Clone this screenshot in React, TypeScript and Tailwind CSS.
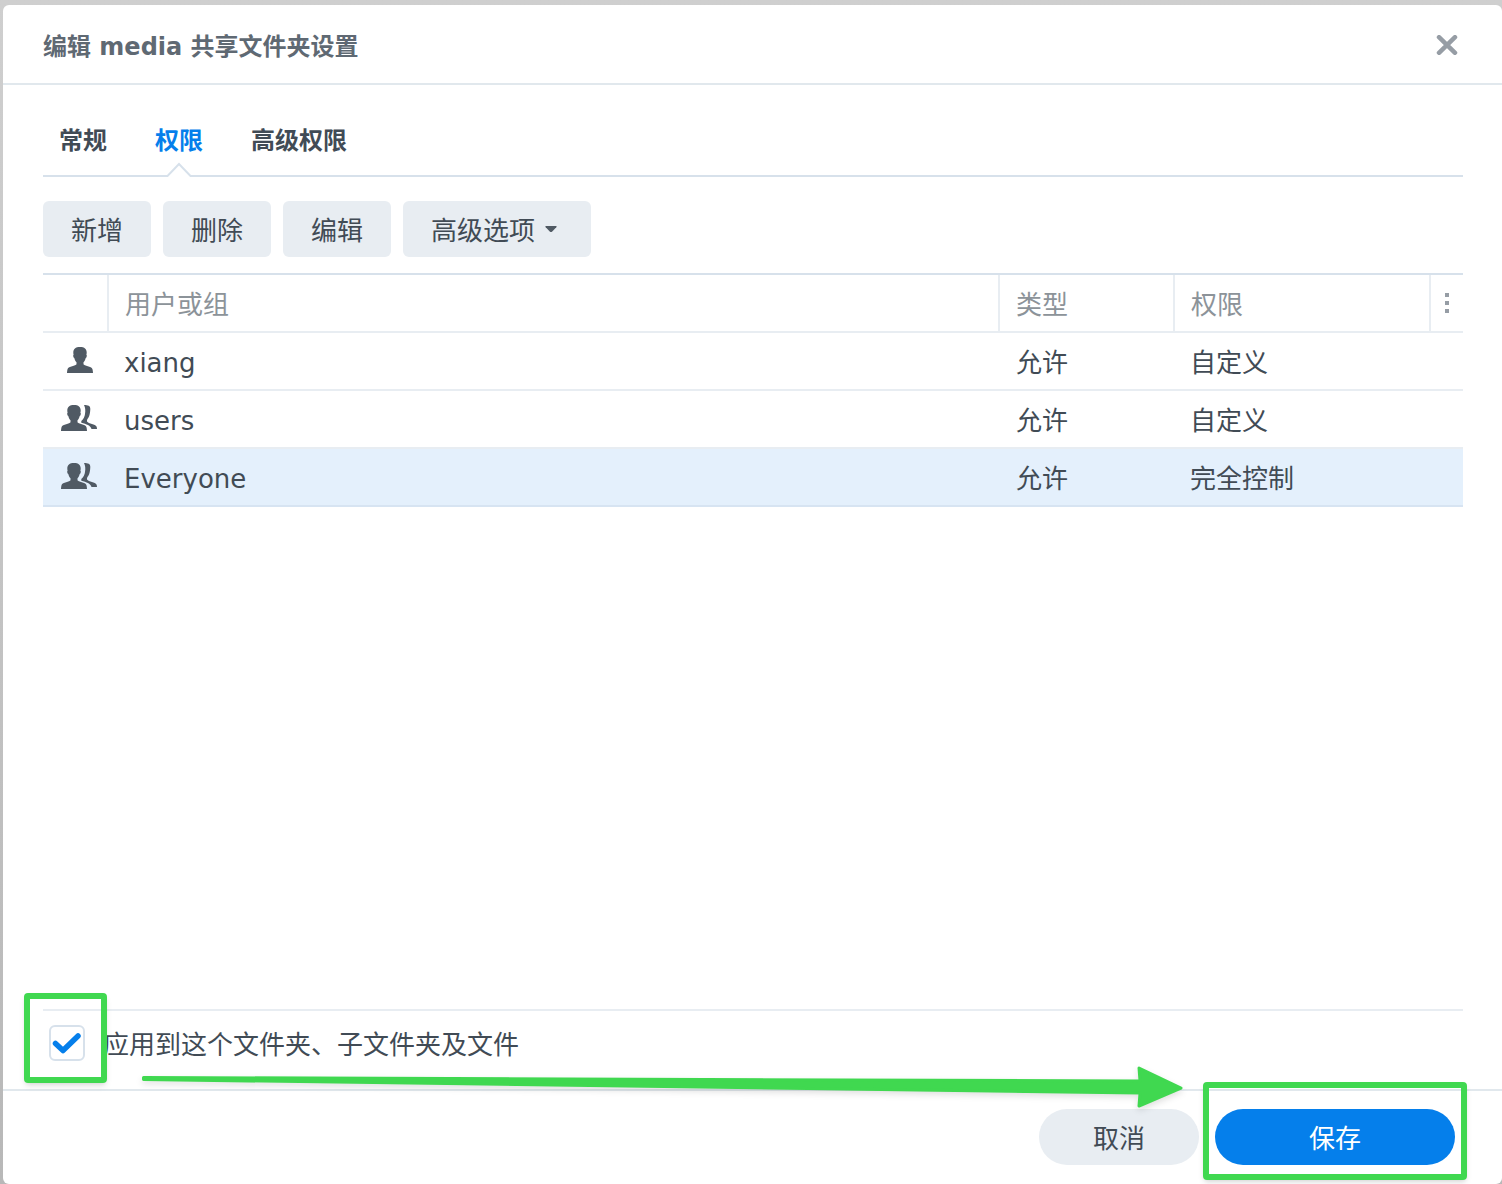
import { useState } from "react";

const tabs = ["常规", "权限", "高级权限"];

const rows = [
  { name: "xiang", group: false, type: "允许", permission: "自定义" },
  { name: "users", group: true, type: "允许", permission: "自定义" },
  { name: "Everyone", group: true, type: "允许", permission: "完全控制" },
];

const person =
  "M13 0C8.500 0 6.300 2 6.300 5.500C6.300 6.800 6.500 7.300 6.600 7.700C5.800 7.900 6.200 10.700 7.300 11C7.700 13 8.500 14.300 9.500 15.200V17.300C9 19 1.500 19.300 0.600 22C0.200 23.400 0 25 0 26H26C26 25 25.800 23.400 25.400 22C24.500 19.300 17 19 16.500 17.300V15.200C17.500 14.300 18.300 13 18.700 11C19.800 10.700 20.200 7.900 19.400 7.700C19.500 7.300 19.700 6.800 19.700 5.500C19.700 2 17.500 0 13 0Z";

function UserIcon() {
  return (
    <svg width="26" height="26" viewBox="0 0 26 26" fill="#505a64" aria-hidden="true">
      <path d={person} />
    </svg>
  );
}

function GroupIcon() {
  return (
    <svg width="36" height="26" viewBox="0 0 36 26" fill="#505a64" aria-hidden="true">
      <path d={person} />
      <path d="M23 0C27 0 29.500 0.800 29.300 4C29.200 6 29 9 28.200 11C27.500 13 26.500 13.500 26 15.200V16.500C27.500 18.800 34.500 19.300 35.500 21.500C35.900 22.500 36 23.300 36 24H30.500C29.500 20.500 25.500 19.300 20.300 17.800V16C22.500 14 23.800 11.500 24 9C24.600 5.500 24.300 2.300 23 0Z" />
    </svg>
  );
}

export default function App() {
  const [tab, setTab] = useState("权限");
  const [selected, setSelected] = useState("Everyone");
  const [recursive, setRecursive] = useState(true);

  return (
    <div className="flex min-h-screen bg-linear-to-b from-[#cfcfcf] to-[#b8b8b8] pt-[5px] pl-[3px] font-['DejaVu_Sans','Noto_Sans_CJK_SC',sans-serif] text-[26px] leading-8 text-[#414b55]">
      <main className="relative flex flex-1 flex-col rounded-md bg-white">
        {/* Title bar */}
        <header className="flex h-20 items-center justify-between border-b-2 border-[#e1e8ed] pr-11 pl-10">
          <h1 className="pt-1.5 text-2xl font-bold text-[#5f6973]">编辑 media 共享文件夹设置</h1>
          <button aria-label="关闭" className="block pt-0.5">
            <svg width="22" height="20" viewBox="0 0 22 20" stroke="#969da5" strokeWidth="4.500" strokeLinecap="round">
              <path d="M3 2.200L19 17.800M19 2.200L3 17.800" />
            </svg>
          </button>
        </header>

        <section className="flex flex-1 flex-col pr-[39px] pl-10">
          {/* Tabs */}
          <nav className="mt-5 flex h-[72px] gap-4 border-b-2 border-[#d7e1eb]">
            {tabs.map((name) => (
              <button
                key={name}
                onClick={() => setTab(name)}
                className={`relative px-4 pt-0.5 text-2xl font-bold ${name === tab ? "text-[#057feb]" : "text-[#414b55]"}`}
              >
                {name}
                {name === tab && (
                  <svg
                    className="absolute -bottom-0.5 left-1/2 -translate-x-1/2"
                    width="26"
                    height="15"
                    viewBox="0 0 26 15"
                  >
                    <path d="M0 15V14H1L13 2L25 14H26V15Z" fill="#fff" />
                    <path d="M0 14H1.500L13 2L24.500 14H26" fill="none" stroke="#d7e1eb" strokeWidth="2" />
                  </svg>
                )}
              </button>
            ))}
          </nav>

          {/* Toolbar */}
          <div className="mt-6 flex gap-3">
            <button className="h-14 rounded-md bg-[#e8edf2] px-7 pt-1">新增</button>
            <button className="h-14 rounded-md bg-[#e8edf2] px-7 pt-1">删除</button>
            <button className="h-14 rounded-md bg-[#e8edf2] px-7 pt-1">编辑</button>
            <button className="flex h-14 items-center gap-2 rounded-md bg-[#e8edf2] pr-8 pl-7">
              <span className="pt-1">高级选项</span>
              <svg width="16" height="8" viewBox="0 0 16 8" fill="#505a64">
                <path d="M3.200 1H12.800Q14.500 1 13.300 2.300L9 6.700Q8 7.500 7 6.700L2.700 2.300Q1.500 1 3.200 1Z" />
              </svg>
            </button>
          </div>

          {/* Permission table */}
          <table className="mt-4 w-full table-fixed border-separate border-spacing-0 border-t-2 border-[#d7e1eb] text-left">
            <thead>
              <tr className="h-[58px] text-[#8c9399]">
                <th className="w-[66px] border-r-2 border-b-2 border-[#e8edf2] p-0" aria-label="图标"></th>
                <th className="border-r-2 border-b-2 border-[#e8edf2] p-0 pt-1 pl-4 font-normal">用户或组</th>
                <th className="w-[175px] border-r-2 border-b-2 border-[#e8edf2] p-0 pt-1 pl-4 font-normal">类型</th>
                <th className="w-[256px] border-r-2 border-b-2 border-[#e8edf2] p-0 pt-1 pl-4 font-normal">权限</th>
                <th className="w-8 border-b-2 border-[#e8edf2] p-0">
                  <button aria-label="列选项" className="mx-auto block">
                    <svg width="4" height="20" viewBox="0 0 4 20" fill="#969da5">
                      <path d="M0 0H4V4H0ZM0 8H4V12H0ZM0 16H4V20H0Z" />
                    </svg>
                  </button>
                </th>
              </tr>
            </thead>
            <tbody>
              {rows.map((row) => {
                const line = row.name === selected ? "border-b-2 border-[#d7e4f2]" : "border-b-2 border-[#e8edf2]";
                return (
                  <tr
                    key={row.name}
                    onClick={() => setSelected(row.name)}
                    className={`h-[58px] ${row.name === selected ? "bg-[#e4f0fc]" : ""}`}
                  >
                    <td className={`p-0 ${line}`}>
                      <div className={`flex pb-0.5 ${row.group ? "pl-[18px]" : "pl-6"}`}>
                        {row.group ? <GroupIcon /> : <UserIcon />}
                      </div>
                    </td>
                    <td className={`p-0 pt-1 pl-[15px] ${line}`}>{row.name}</td>
                    <td className={`p-0 pt-1 pl-4 ${line}`}>{row.type}</td>
                    <td className={`p-0 pt-1 pl-[15px] ${line}`}>{row.permission}</td>
                    <td className={`p-0 ${line}`}></td>
                  </tr>
                );
              })}
            </tbody>
          </table>

          {/* Apply to sub folders */}
          <div className="mt-auto flex h-20 items-start gap-[18px] border-t-2 border-[#e8edf2] pt-3.5 pl-1.5">
            <div className="relative size-9">
              <input
                id="recursive"
                type="checkbox"
                checked={recursive}
                onChange={(e) => setRecursive(e.target.checked)}
                className="block size-9 appearance-none rounded-md border-2 border-[#d7e1eb] bg-white"
              />
              {recursive && (
                <svg
                  className="pointer-events-none absolute inset-0"
                  width="36"
                  height="36"
                  viewBox="0 0 36 36"
                  fill="none"
                  stroke="#057feb"
                  strokeWidth="5.500"
                  strokeLinecap="round"
                  strokeLinejoin="round"
                >
                  <path d="M6.500 18.500L14 25.500L29 11" />
                </svg>
              )}
              <span className="pointer-events-none absolute -top-8 -right-[22px] -bottom-[22px] -left-[25px] z-10 rounded-sm border-6 border-[#40d850] shadow-md"></span>
            </div>
            <label htmlFor="recursive" className="pt-1">
              应用到这个文件夹、子文件夹及文件
            </label>
          </div>
        </section>

        {/* Buttons */}
        <footer className="relative flex justify-end gap-4 border-t-2 border-[#e1e8ed] pt-[18px] pr-[47px] pb-[19px]">
          <button className="h-14 w-40 rounded-full bg-[#e8edf2] pt-1">取消</button>
          <div className="relative">
            <button className="h-14 w-60 rounded-full bg-[#057feb] pt-1 text-white">保存</button>
            <span className="pointer-events-none absolute -top-[27px] -right-3 -bottom-[15px] -left-3 rounded-sm border-6 border-[#40d850] shadow-md"></span>
          </div>
          {/* Arrow from the checkbox to the save button */}
          <div className="pointer-events-none absolute -top-[26px] right-[319px] left-[139px]">
            <svg
              className="h-11 w-full drop-shadow-md"
              viewBox="0 0 1041 44"
              preserveAspectRatio="none"
              fill="#40d850"
              stroke="#40d850"
              strokeWidth="3"
              strokeLinejoin="round"
            >
              <path d="M1.500 12.500L998 16L997 3L1039 23L997 41L998 28L1.500 14.500Z" />
            </svg>
          </div>
        </footer>
      </main>
    </div>
  );
}
